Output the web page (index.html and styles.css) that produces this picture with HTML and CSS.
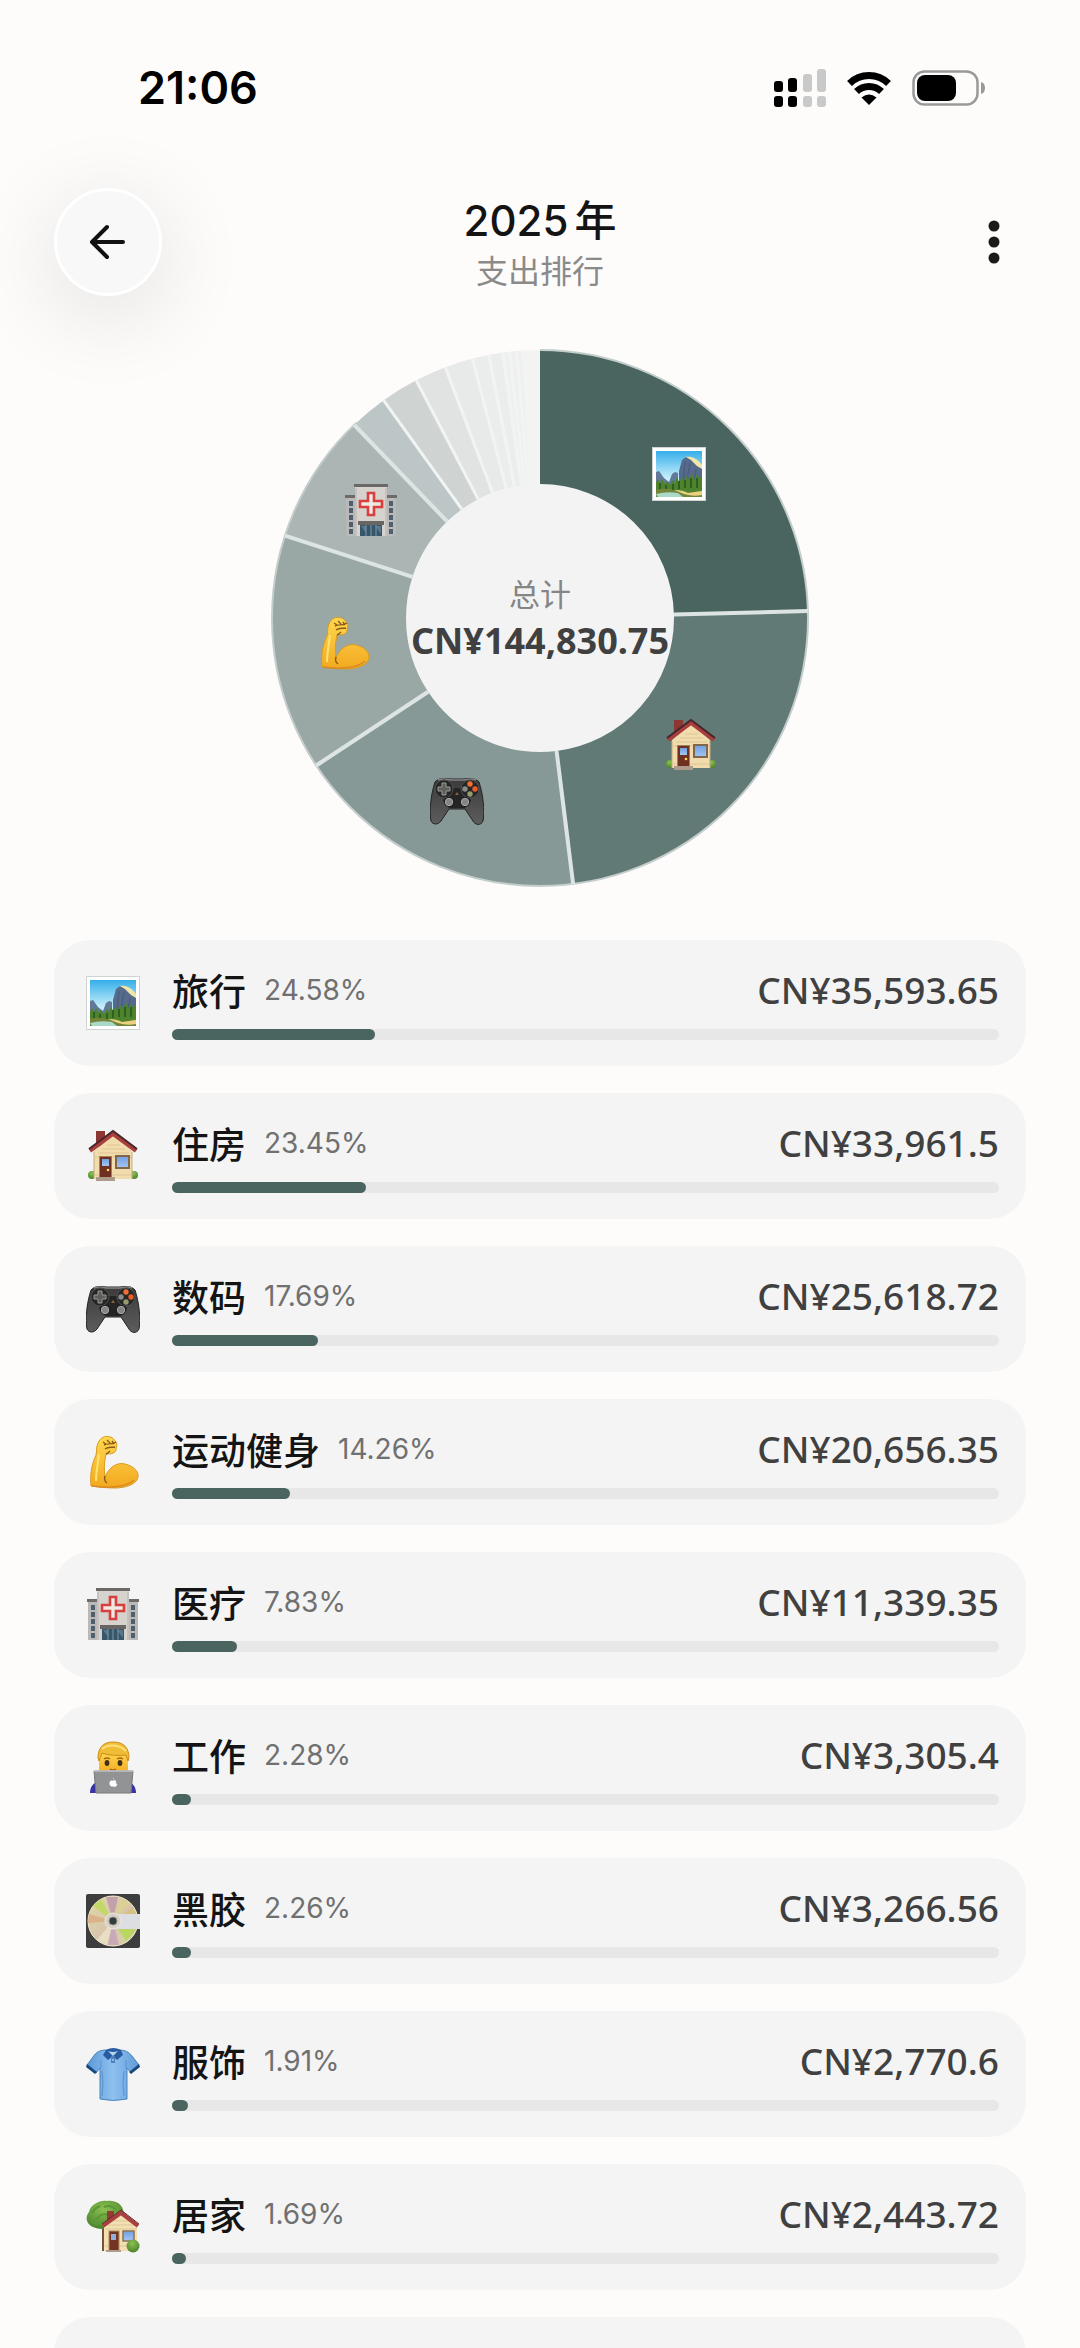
FILE: index.html
```html
<!DOCTYPE html>
<html lang="zh-CN">
<head>
    <meta charset="UTF-8">
    <meta name="viewport" content="width=device-width, initial-scale=1.0">
    <title>支出排行</title>
    <link rel="stylesheet" href="styles.css">
</head>
<body>
    <!-- Category icons, shared by the chart and the list -->
    <svg class="sprite" aria-hidden="true">
        <defs>
            <linearGradient id="sky" x1="0" y1="0" x2="0" y2="1"><stop offset="0" stop-color="#35aee9"/><stop offset="0.6" stop-color="#c9f0fb"/></linearGradient>
            <linearGradient id="skin" x1="0" y1="0" x2="0" y2="1"><stop offset="0" stop-color="#ffd84f"/><stop offset="1" stop-color="#f2a91f"/></linearGradient>
            <linearGradient id="pad" x1="0" y1="0" x2="0" y2="1"><stop offset="0" stop-color="#3a3a3a"/><stop offset="1" stop-color="#5d5d5d"/></linearGradient>
            <linearGradient id="cloth" x1="0" y1="0" x2="1" y2="0"><stop offset="0" stop-color="#5c98d6"/><stop offset="0.5" stop-color="#8fc1f0"/><stop offset="1" stop-color="#5f9ad8"/></linearGradient>
            <linearGradient id="glass" x1="0" y1="0" x2="0" y2="1"><stop offset="0" stop-color="#6f9fe2"/><stop offset="1" stop-color="#a5c6f2"/></linearGradient>
            <radialGradient id="leaf" cx="0.45" cy="0.3" r="0.7"><stop offset="0" stop-color="#8cc152"/><stop offset="1" stop-color="#4a832a"/></radialGradient>
            <linearGradient id="disc" x1="0" y1="0" x2="1" y2="1"><stop offset="0" stop-color="#e0d9a0"/><stop offset="0.5" stop-color="#d8c6ae"/><stop offset="1" stop-color="#d6d3a4"/></linearGradient>
        </defs>

        <symbol id="icon-travel" viewBox="0 0 54 54">
            <rect x="0.5" y="0.5" width="53" height="53" fill="#fff" stroke="#d2d4d4"/>
            <rect x="4" y="4" width="46" height="46" fill="url(#sky)"/>
            <path d="M4 25l3-1 5 7 5 4 3-8 3-2 3 1v14H4z" fill="#62799a"/>
            <path d="M33 10c6-1 12 1 17 8v6L38 14z" fill="#f1e7a8"/>
            <path d="M27 38V24l3-11 4-3 5 3 6 6 5 3v18H27z" fill="#566b8c"/>
            <path d="M33 15l-2 20M38 16l-3 17M44 22l-2 12" stroke="#4a5f81" stroke-width="1.5"/>
            <path d="M4 36l2-4 2 4 2-4 3 5 2-3 3 4 3-5 2 3 2-6 2 5 3-5 2 5 3-7 2 5 3-7 2 7 3-6 2 5 3-4v22H4z" fill="#4d832c"/>
            <path d="M8 36v7M14 38v6M21 37v6M27 34v8M33 33v8M39 31v10M45 31v10" stroke="#28571f" stroke-width="1.6"/>
            <path d="M4 43q10-3 20 1t26-1v7H4z" fill="#71843a"/>
            <path d="M4 47q11-3 22-1l5 4H6z" fill="#a9d9c7"/>
            <path d="M22 43q9 0 14 3l14-2v4q-9 2-18-1z" fill="#ecd181"/>
        </symbol>

        <symbol id="icon-house" viewBox="0 0 54 54">
            <circle cx="6" cy="46" r="4" fill="url(#leaf)"/>
            <circle cx="48" cy="46" r="4" fill="url(#leaf)"/>
            <rect x="10" y="2" width="9" height="16" fill="#8c3731"/>
            <path d="M8 22L27 6l19 16v28H8z" fill="#f1dcae"/>
            <path d="M21 16h13M16 20h23M12 24h31M9 28h37M9 46h37" stroke="#dfc492"/>
            <path d="M8 23v27M46 23v27" stroke="#c6ab7d"/>
            <path d="M4 22L27 5l23 17" fill="none" stroke="#a83f3c" stroke-width="4"/>
            <path d="M3 20L27 2l24 18" fill="none" stroke="#47252a" stroke-width="2"/>
            <rect x="13" y="27" width="13" height="23" fill="#a57f58"/>
            <rect x="14" y="28" width="11" height="22" fill="#6f2f21"/>
            <rect x="16" y="30" width="7" height="7" fill="url(#glass)"/>
            <circle cx="22" cy="41" r="1.3" fill="#ffd95a"/>
            <rect x="30" y="27" width="13" height="12" fill="url(#glass)" stroke="#81664c" stroke-width="2"/>
            <rect x="10" y="48" width="19" height="4" fill="#ad9b8b"/>
        </symbol>

        <symbol id="icon-game" viewBox="0 0 54 54">
            <path d="M5 8C8 4 15 4 20 5h14c5-1 12-1 15 3 4 12 6 29 4 39-2 5-8 4-10 0l-8-12H19l-8 12c-3 4-8 4-10 0C-1 37 1 20 5 8z" fill="url(#pad)" stroke="#232323"/>
            <path d="M8 6c5-2 9-1 12 0h14c4-1 8-2 12 0" fill="none" stroke="#858585" stroke-width="1.5"/>
            <path d="M17 14h20l4 13-6 7H19l-6-7z" fill="#242424"/>
            <circle cx="14" cy="15" r="9" fill="#262626" stroke="#515151"/>
            <circle cx="40" cy="15" r="9" fill="#262626" stroke="#515151"/>
            <path d="M12 9h4v4h4v4h-4v4h-4v-4H8v-4h4z" fill="#5e5e5c" stroke="#999994"/>
            <circle cx="40" cy="10" r="2.7" fill="#f07035"/><circle cx="45" cy="15" r="2.7" fill="#ed5b28"/>
            <circle cx="35" cy="15" r="2.7" fill="#8b8c8a"/><circle cx="40" cy="20" r="2.7" fill="#949c6c"/>
            <path d="M27 18l2 3h-4z" fill="#8c6038"/>
            <circle cx="19" cy="28" r="5" fill="#1d1d1d"/><circle cx="19" cy="28" r="3.7" fill="#858585" stroke="#aaa"/>
            <circle cx="35" cy="28" r="5" fill="#1d1d1d"/><circle cx="35" cy="28" r="3.7" fill="#858585" stroke="#aaa"/>
        </symbol>

        <symbol id="icon-fitness" viewBox="0 0 54 54">
            <path d="M5 51C4 41 5 31 10 20c1-4 0-8 2-12 2-5 7-8 12-6 3 0 4 3 6 5 2 3 0 5 0 8-1 4-6 4-10 4-2 9-2 16-1 23 4-10 12-15 20-13 9 2 14 8 13 13-1 7-12 11-23 11-9 0-16-1-24-2z" fill="url(#skin)" stroke="#d99b22"/>
            <path d="M13 19c-1 9-3 18-3 27" fill="none" stroke="#ffe372" stroke-width="2"/>
            <path d="M19 41c-1 3-1 5 2 7M17 7l3 2M21 5l3 3M26 6l2 3M18 10c4-2 8 0 12-3M19 14c4-3 7-1 10-2M20 19c2-1 3-2 4-3" fill="none" stroke="#8b5918" stroke-width="1.4"/>
            <path d="M6 51c13 2 34 2 42-6" fill="none" stroke="#d88921" stroke-width="1.5"/>
        </symbol>

        <symbol id="icon-hospital" viewBox="0 0 54 54">
            <path d="M2 13h11v39H2zM41 13h11v39H41z" fill="#bbb9b8"/>
            <path d="M1 11h12v3H1zM41 11h12v3H41z" fill="#6c6b6a"/>
            <path d="M7 17v34M47 17v34" stroke="#4e606e" stroke-width="4" stroke-dasharray="5 2"/>
            <rect x="11" y="2" width="32" height="50" fill="#d6d3ce"/>
            <rect x="10" y="0" width="34" height="3" fill="#6b6967"/>
            <path d="M12 4v48M42 4v48" stroke="#b5afa9"/>
            <path d="M24 9h6v8h8v6h-8v8h-6v-8h-8v-6h8z" fill="#eee9e3" stroke="#d93f3e" stroke-width="2.6"/>
            <rect x="14" y="37" width="26" height="4" fill="#686563"/>
            <path d="M16 41h22v11H16z" fill="#38566a"/>
            <path d="M17 42l5 7V42zM31 42l6 8v-8z" fill="#55788e"/>
            <path d="M22 41v11M27 41v11M32 41v11" stroke="#7d98a7"/>
        </symbol>

        <symbol id="icon-work" viewBox="0 0 54 54">
            <path d="M4 52c0-6 3-10 9-12h28c6 2 9 6 9 12z" fill="#3732a8"/>
            <path d="M13 10h29v24H13z" fill="url(#skin)"/>
            <path d="M12 17C12 7 17 1 27 1c11 0 16 6 16 16l-1 3-2-6c-9 1-19 0-24-2l-3 8z" fill="#f0bd37" stroke="#cc8b17"/>
            <path d="M16 8c6-5 17-5 24 2" fill="none" stroke="#ffe07a" stroke-width="2"/>
            <path d="M18 18q3-2 6 0M31 18q3-2 6 0" fill="none" stroke="#9c691b" stroke-width="1.5"/>
            <ellipse cx="21" cy="22" rx="2.4" ry="3" fill="#443018"/><ellipse cx="34" cy="22" rx="2.4" ry="3" fill="#443018"/>
            <path d="M24 28q3 2 6 0" fill="none" stroke="#9e561e" stroke-width="1.5"/>
            <path d="M8 30h39l-2 22H10z" fill="#929395" stroke="#77787a"/>
            <path d="M8 30h39" stroke="#c5c6c7" stroke-width="1.5"/>
            <path d="M27 40c2-1 3 0 3 1-1 1 0 2 1 2-1 3-2 3-4 2-2 1-4-1-3-4 1-2 2-1 3-1zM27 38l1-1" fill="#fff" stroke="#fff" stroke-width="0.6"/>
        </symbol>

        <symbol id="icon-vinyl" viewBox="0 0 54 54">
            <rect width="54" height="54" rx="2" fill="#3d3d3d"/>
            <circle cx="27" cy="27" r="25" fill="url(#disc)" stroke="#efeacd"/>
            <path d="M27 27L7 12l8-7z" fill="#c2d968"/><path d="M27 27L20 3h12z" fill="#c2a1ab"/>
            <path d="M27 27L35 4l9 5z" fill="#ddd094"/><path d="M27 27L3 20l-1 9z" fill="#dbb28a"/>
            <path d="M27 27L11 46l10 5z" fill="#e9dec3"/><path d="M27 27L22 51h11z" fill="#c9a9b7"/>
            <path d="M27 27l13 20 10-11z" fill="#b9d660"/><path d="M27 27L47 13l4 9z" fill="#d6c184"/>
            <path d="M31 20h23v15H31z" fill="#dddee2"/>
            <circle cx="27" cy="27" r="8" fill="#d6d0c7" stroke="#eee8df"/>
            <circle cx="27" cy="27" r="4" fill="#333b3a" stroke="#858b88"/>
        </symbol>

        <symbol id="icon-clothes" viewBox="0 0 54 54">
            <path d="M20 3C14 3 10 5 7 10L1 18l9 8 4-5v31q13 3 27 0V21l4 5 8-8-7-9c-3-4-7-6-13-6z" fill="url(#cloth)" stroke="#4a83bc"/>
            <path d="M15 13v8M40 13v8M16 24q2 12 0 25M38 24q-2 12 0 25" fill="none" stroke="#5b92cb"/>
            <path d="M1 17l10 8-2 2-9-7zM53 17l-10 8 2 2 9-7z" fill="#17487e"/>
            <path d="M20 3q7-4 15 0l2 5-6 5-4-4-5 4-5-5z" fill="#285ca2"/>
            <path d="M22 4q5 2 10 0l-5 5z" fill="#b8d7ee"/>
            <path d="M25 9h4v7h-4z" fill="#4e81b9"/><circle cx="27" cy="13" r="0.8" fill="#fff"/>
        </symbol>

        <symbol id="icon-home" viewBox="0 0 54 54">
            <path d="M16 23l6-1v29h-6z" fill="#75543b"/>
            <path d="M7 27C0 24-1 17 3 12 5 4 14 0 21 1c8-1 15 3 16 9 4 8-1 14-8 14-6 6-15 6-22 3z" fill="url(#leaf)"/>
            <path d="M6 13q3-5 8-7M10 20q5-8 13-5M18 7q7-3 12 3M6 22q6 4 12 0" fill="none" stroke="#599837" stroke-width="2"/>
            <rect x="21" y="11" width="7" height="12" fill="#943b34"/>
            <path d="M18 26l17-13 16 13v25H18z" fill="#f2dfb2"/>
            <path d="M27 21h16M22 25h27M19 29h32M19 46h32" stroke="#dfc798"/>
            <path d="M17 26l18-13 17 13" fill="none" stroke="#aa3f40" stroke-width="4"/>
            <path d="M16 24l19-14 18 14" fill="none" stroke="#63292a"/>
            <rect x="23" y="31" width="10" height="20" fill="#743424" stroke="#b38a60"/>
            <rect x="25" y="34" width="5" height="6" fill="#8eaedb"/>
            <rect x="37" y="31" width="11" height="10" fill="url(#glass)" stroke="#8d7355" stroke-width="1.5"/>
            <circle cx="47" cy="46" r="6.5" fill="url(#leaf)"/>
            <path d="M20 50h15v2H20z" fill="#ad9b8b"/>
        </symbol>
    </svg>

    <div class="screen">
        <!-- Status bar -->
        <div class="status-bar">
            <span class="clock">21:06</span>
            <div class="status-icons">
                <svg width="52" height="38" viewBox="0 0 52 38">
                    <g fill="#000"><rect y="12" width="9" height="11" rx="3"/><rect x="14" y="9" width="9" height="14" rx="3"/><rect y="27" width="9" height="11" rx="3"/><rect x="14" y="27" width="9" height="11" rx="3"/></g>
                    <g fill="#c9c9c9"><rect x="29" y="5" width="9" height="18" rx="3"/><rect x="43" width="9" height="23" rx="3"/><rect x="29" y="27" width="9" height="11" rx="3"/><rect x="43" y="27" width="9" height="11" rx="3"/></g>
                </svg>
                <svg width="46" height="34" viewBox="0 0 46 34">
                    <path d="M3.500 12.500a28 28 0 0 1 39 0M10.500 20.500a18 18 0 0 1 25 0" fill="none" stroke="#000" stroke-width="7"/>
                    <path d="M15.500 26.500q7.500-6 15 0L23 34z"/>
                </svg>
                <svg width="74" height="36" viewBox="0 0 74 36">
                    <rect x="1.500" y="1.500" width="64" height="33" rx="11" fill="none" stroke="#999" stroke-width="2.500"/>
                    <rect x="5" y="5" width="39" height="26" rx="8"/>
                    <path d="M69 12q4 1 4 6t-4 6z" fill="#999"/>
                </svg>
            </div>
        </div>

        <!-- Page header -->
        <header class="header">
            <button class="back-btn" type="button" aria-label="返回">
                <svg width="38" height="38" viewBox="0 0 38 38"><path d="M34 19H4M18 4L3 19l15 15" fill="none" stroke="#111" stroke-width="4" stroke-linecap="round" stroke-linejoin="round"/></svg>
            </button>
            <div class="heading">
                <h1><span class="year">2025</span>年</h1>
                <p>支出排行</p>
            </div>
            <button class="menu-btn" type="button" aria-label="更多">
                <svg width="12" height="46" viewBox="0 0 12 46" fill="#1a1a1a"><circle cx="6" cy="7" r="5.500"/><circle cx="6" cy="23" r="5.500"/><circle cx="6" cy="39" r="5.500"/></svg>
            </button>
        </header>

        <!-- Donut chart -->
        <section class="chart">
            <svg class="donut" width="540" height="540" viewBox="-270 -270 540 540" aria-hidden="true">
                <circle r="140" fill="#f3f3f4"/>
                <g transform="rotate(-90)" fill="none" stroke-width="134">
                    <circle r="201" pathLength="100" stroke="#4a655f" stroke-dasharray="24.58 100"/>
                    <circle r="201" pathLength="100" stroke="#627a76" stroke-dasharray="23.45 100" stroke-dashoffset="-24.58"/>
                    <circle r="201" pathLength="100" stroke="#879996" stroke-dasharray="17.69 100" stroke-dashoffset="-48.03"/>
                    <circle r="201" pathLength="100" stroke="#9aa8a5" stroke-dasharray="14.26 100" stroke-dashoffset="-65.72"/>
                    <circle r="201" pathLength="100" stroke="#abb5b3" stroke-dasharray="7.83 100" stroke-dashoffset="-79.98"/>
                    <circle r="201" pathLength="100" stroke="#bcc6c6" stroke-dasharray="2.28 100" stroke-dashoffset="-87.81"/>
                    <circle r="201" pathLength="100" stroke="#cfd4d2" stroke-dasharray="2.26 100" stroke-dashoffset="-90.09"/>
                    <circle r="201" pathLength="100" stroke="#e0e3e2" stroke-dasharray="1.91 100" stroke-dashoffset="-92.35"/>
                    <circle r="201" pathLength="100" stroke="#e8eae9" stroke-dasharray="1.69 100" stroke-dashoffset="-94.26"/>
                    <circle r="201" pathLength="100" stroke="#ebedec" stroke-dasharray="1.95 100" stroke-dashoffset="-95.95"/>
                    <circle r="201" pathLength="100" stroke="#efefef" stroke-dasharray="1.1 100" stroke-dashoffset="-97.9"/>
                    <circle r="201" pathLength="100" stroke="#f3f3f3" stroke-dasharray="1 100" stroke-dashoffset="-99"/>
                </g>
                <circle r="268" pathLength="100" transform="rotate(-90)" fill="none" stroke="#c3cdcb" stroke-width="2" stroke-dasharray="88 12"/>
                <g stroke="#dde5e4" stroke-width="4">
                    <path d="M0-134V-268" transform="rotate(88.500)"/>
                    <path d="M0-134V-268" transform="rotate(172.900)"/>
                    <path d="M0-134V-268" transform="rotate(236.600)"/>
                    <path d="M0-134V-268" transform="rotate(287.900)"/>
                    <path d="M0-134V-268" transform="rotate(316.100)"/>
                </g>
                <g stroke="#f1f4f3" stroke-width="3">
                    <path d="M0-134V-268" transform="rotate(324.300)"/>
                    <path d="M0-134V-268" transform="rotate(332.500)"/>
                    <path d="M0-134V-268" transform="rotate(339.300)"/>
                    <path d="M0-134V-268" transform="rotate(345.400)"/>
                    <path d="M0-134V-268" transform="rotate(349)"/>
                    <path d="M0-134V-268" transform="rotate(352)"/>
                    <path d="M0-134V-268" transform="rotate(353.500)"/>
                    <path d="M0-134V-268" transform="rotate(355)"/>
                    <path d="M0-134V-268" transform="rotate(356.300)"/>
                </g>
                <use href="#icon-travel" x="112" y="-171" width="54" height="54"/>
                <use href="#icon-house" x="124" y="100" width="54" height="54"/>
                <use href="#icon-game" x="-110" y="156" width="54" height="54"/>
                <use href="#icon-fitness" x="-223" y="-2" width="54" height="54"/>
                <use href="#icon-hospital" x="-196" y="-134" width="54" height="54"/>
            </svg>
            <div class="total">
                <span class="total-label">总计</span>
                <strong class="total-amount">CN¥144,830.75</strong>
            </div>
        </section>

        <!-- Ranking list -->
        <ul class="ranking">
            <li class="card">
                <svg class="icon"><use href="#icon-travel"/></svg>
                <div class="info">
                    <div class="line"><span class="name">旅行</span><span class="percent">24.58%</span><span class="amount">CN¥35,593.65</span></div>
                    <div class="track"><div class="fill" style="width: 24.58%"></div></div>
                </div>
            </li>
            <li class="card">
                <svg class="icon"><use href="#icon-house"/></svg>
                <div class="info">
                    <div class="line"><span class="name">住房</span><span class="percent">23.45%</span><span class="amount">CN¥33,961.5</span></div>
                    <div class="track"><div class="fill" style="width: 23.45%"></div></div>
                </div>
            </li>
            <li class="card">
                <svg class="icon"><use href="#icon-game"/></svg>
                <div class="info">
                    <div class="line"><span class="name">数码</span><span class="percent">17.69%</span><span class="amount">CN¥25,618.72</span></div>
                    <div class="track"><div class="fill" style="width: 17.69%"></div></div>
                </div>
            </li>
            <li class="card">
                <svg class="icon"><use href="#icon-fitness"/></svg>
                <div class="info">
                    <div class="line"><span class="name">运动健身</span><span class="percent">14.26%</span><span class="amount">CN¥20,656.35</span></div>
                    <div class="track"><div class="fill" style="width: 14.26%"></div></div>
                </div>
            </li>
            <li class="card">
                <svg class="icon"><use href="#icon-hospital"/></svg>
                <div class="info">
                    <div class="line"><span class="name">医疗</span><span class="percent">7.83%</span><span class="amount">CN¥11,339.35</span></div>
                    <div class="track"><div class="fill" style="width: 7.83%"></div></div>
                </div>
            </li>
            <li class="card">
                <svg class="icon"><use href="#icon-work"/></svg>
                <div class="info">
                    <div class="line"><span class="name">工作</span><span class="percent">2.28%</span><span class="amount">CN¥3,305.4</span></div>
                    <div class="track"><div class="fill" style="width: 2.28%"></div></div>
                </div>
            </li>
            <li class="card">
                <svg class="icon"><use href="#icon-vinyl"/></svg>
                <div class="info">
                    <div class="line"><span class="name">黑胶</span><span class="percent">2.26%</span><span class="amount">CN¥3,266.56</span></div>
                    <div class="track"><div class="fill" style="width: 2.26%"></div></div>
                </div>
            </li>
            <li class="card">
                <svg class="icon"><use href="#icon-clothes"/></svg>
                <div class="info">
                    <div class="line"><span class="name">服饰</span><span class="percent">1.91%</span><span class="amount">CN¥2,770.6</span></div>
                    <div class="track"><div class="fill" style="width: 1.91%"></div></div>
                </div>
            </li>
            <li class="card">
                <svg class="icon"><use href="#icon-home"/></svg>
                <div class="info">
                    <div class="line"><span class="name">居家</span><span class="percent">1.69%</span><span class="amount">CN¥2,443.72</span></div>
                    <div class="track"><div class="fill" style="width: 1.69%"></div></div>
                </div>
            </li>
            <li class="card card-next"></li>
        </ul>
    </div>
</body>
</html>
```

FILE: styles.css
```css
* { box-sizing: border-box; }
body { margin: 0; background: #fdfcfb; color: #141414; font-family: Inter, "Noto Sans CJK SC", sans-serif; }
h1, p, ul { margin: 0; padding: 0; }
button { padding: 0; border: none; background: none; cursor: pointer; }
svg { display: block; }
.sprite { position: absolute; width: 0; height: 0; }
.screen { height: 100vh; overflow: hidden; display: flex; flex-direction: column; }

.status-bar { display: flex; align-items: center; justify-content: space-between; height: 176px; flex-shrink: 0; padding: 0 94px 0 138px; }
.clock { font-size: 45px; font-weight: 600; line-height: 54px; color: #000; }
.status-icons { display: flex; align-items: center; gap: 20px; }

.header { display: grid; grid-template-columns: 108px 1fr 108px; align-items: center; padding: 12px 54px 0; }
.back-btn { display: flex; align-items: center; justify-content: center; width: 108px; height: 108px; border: 3px solid #fff; border-radius: 50%; background: #f8f8f8; box-shadow: 0 18px 90px rgba(0, 0, 0, 0.12); }
.heading { padding-top: 4px; text-align: center; }
.heading h1 { font-size: 42px; font-weight: 500; line-height: 56px; }
.year { margin-right: 6px; }
.heading p { font-size: 32px; line-height: 46px; color: #8a8a8a; }
.menu-btn { display: flex; align-items: center; justify-content: center; justify-self: end; width: 64px; height: 64px; }

.chart { display: grid; place-items: center; padding: 52px 0; }
.donut, .total { grid-area: 1 / 1; }
.total { display: flex; flex-direction: column; align-items: center; }
.total-label { font-size: 31px; line-height: 46px; color: #858585; }
.total-amount { font-family: "Noto Sans", sans-serif; font-size: 36px; font-weight: 700; line-height: 46px; color: #404040; }

.ranking { display: flex; flex-direction: column; gap: 27px; padding: 0 54px; list-style: none; }
.card { display: flex; align-items: center; gap: 32px; padding: 26px 27px 26px 32px; border-radius: 36px; background: #f4f4f4; }
.card-next { min-height: 126px; }
.icon { width: 54px; height: 54px; flex-shrink: 0; }
.info { flex: 1; display: flex; flex-direction: column; gap: 16px; }
.line { display: flex; align-items: center; height: 47px; }
.name { font-size: 37px; font-weight: 500; }
.percent { margin-left: 18px; font-size: 28px; color: #707070; }
.amount { margin-left: auto; font-family: "Noto Sans", sans-serif; font-size: 37px; font-weight: 500; color: #404040; }
.track { height: 11px; border-radius: 6px; background: #e7e7e7; }
.fill { height: 11px; border-radius: 6px; background: #4a655f; }
```
